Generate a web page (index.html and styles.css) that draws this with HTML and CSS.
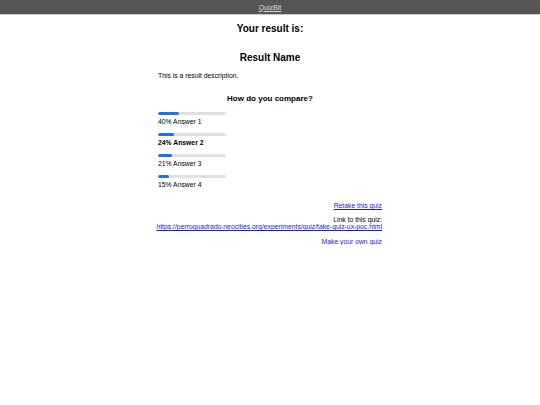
FILE: index.html
```html
<!DOCTYPE html>
<html>
<head>
<meta charset="utf-8">
<link rel="stylesheet" href="styles.css">
</head>
<body>
<header class="topbar"><a href="#" class="brand">QuizBit</a></header>
<main class="content">
  <h2 class="title">Your result is:</h2>
  <h2 class="result-name">Result Name</h2>
  <p class="desc">This is a result description.</p>
  <h3 class="compare">How do you compare?</h3>
  <div class="answers">
    <div class="answer">
      <div class="bar"><div class="fill" style="width:31%"></div></div>
      <div class="label">40% Answer 1</div>
    </div>
    <div class="answer mine">
      <div class="bar"><div class="fill" style="width:24%"></div></div>
      <div class="label">24% Answer 2</div>
    </div>
    <div class="answer">
      <div class="bar"><div class="fill" style="width:21%"></div></div>
      <div class="label">21% Answer 3</div>
    </div>
    <div class="answer">
      <div class="bar"><div class="fill" style="width:16%"></div></div>
      <div class="label">15% Answer 4</div>
    </div>
  </div>
  <div class="links">
    <a href="#" class="retake">Retake this quiz</a>
    <div class="share">Link to this quiz:<br><a href="#" class="url">https://perroquadrado.neocities.org/experiments/quiz/take-quiz-ux-poc.html</a></div>
    <a href="#" class="make">Make your own quiz</a>
  </div>
</main>
</body>
</html>
```
FILE: styles.css
```css
html, body {
  margin: 0;
  padding: 0;
  background: #fff;
  font-family: "Liberation Sans", Arial, sans-serif;
  color: #000;
}
.topbar {
  height: 14px;
  background: #555;
  border-bottom: 1px solid #ccc;
  display: flex;
  align-items: center;
  justify-content: center;
}
.brand {
  color: #ddd;
  font-size: 7px;
}
.content {
  width: 224px;
  margin: 0 auto;
  font-size: 6.8px;
}
.title {
  font-size: 10px;
  text-align: center;
  margin: 8px 0 0;
}
.result-name {
  font-size: 10px;
  text-align: center;
  margin: 18px 0 0;
}
.desc {
  margin: 9px 0 0;
}
.compare {
  font-size: 8px;
  text-align: center;
  margin: 15px 0 0;
}
.answers {
  margin-top: 9px;
  display: flex;
  flex-direction: column;
  gap: 8px;
}
.bar {
  width: 68px;
  height: 3px;
  background: #e0e0e0;
  border-radius: 2px;
  overflow: hidden;
}
.fill {
  height: 100%;
  background: #1a73e8;
  border-radius: 2px;
}
.label {
  margin-top: 3px;
}
.mine .label {
  font-weight: bold;
}
.links {
  margin-top: 14px;
  text-align: right;
  display: flex;
  flex-direction: column;
  align-items: flex-end;
  gap: 7px;
}
.links .make {
  margin-top: 1px;
}
a {
  color: #1a1ad6;
}
.url {
  white-space: nowrap;
}
.topbar .brand {
  color: #ddd;
}
```
